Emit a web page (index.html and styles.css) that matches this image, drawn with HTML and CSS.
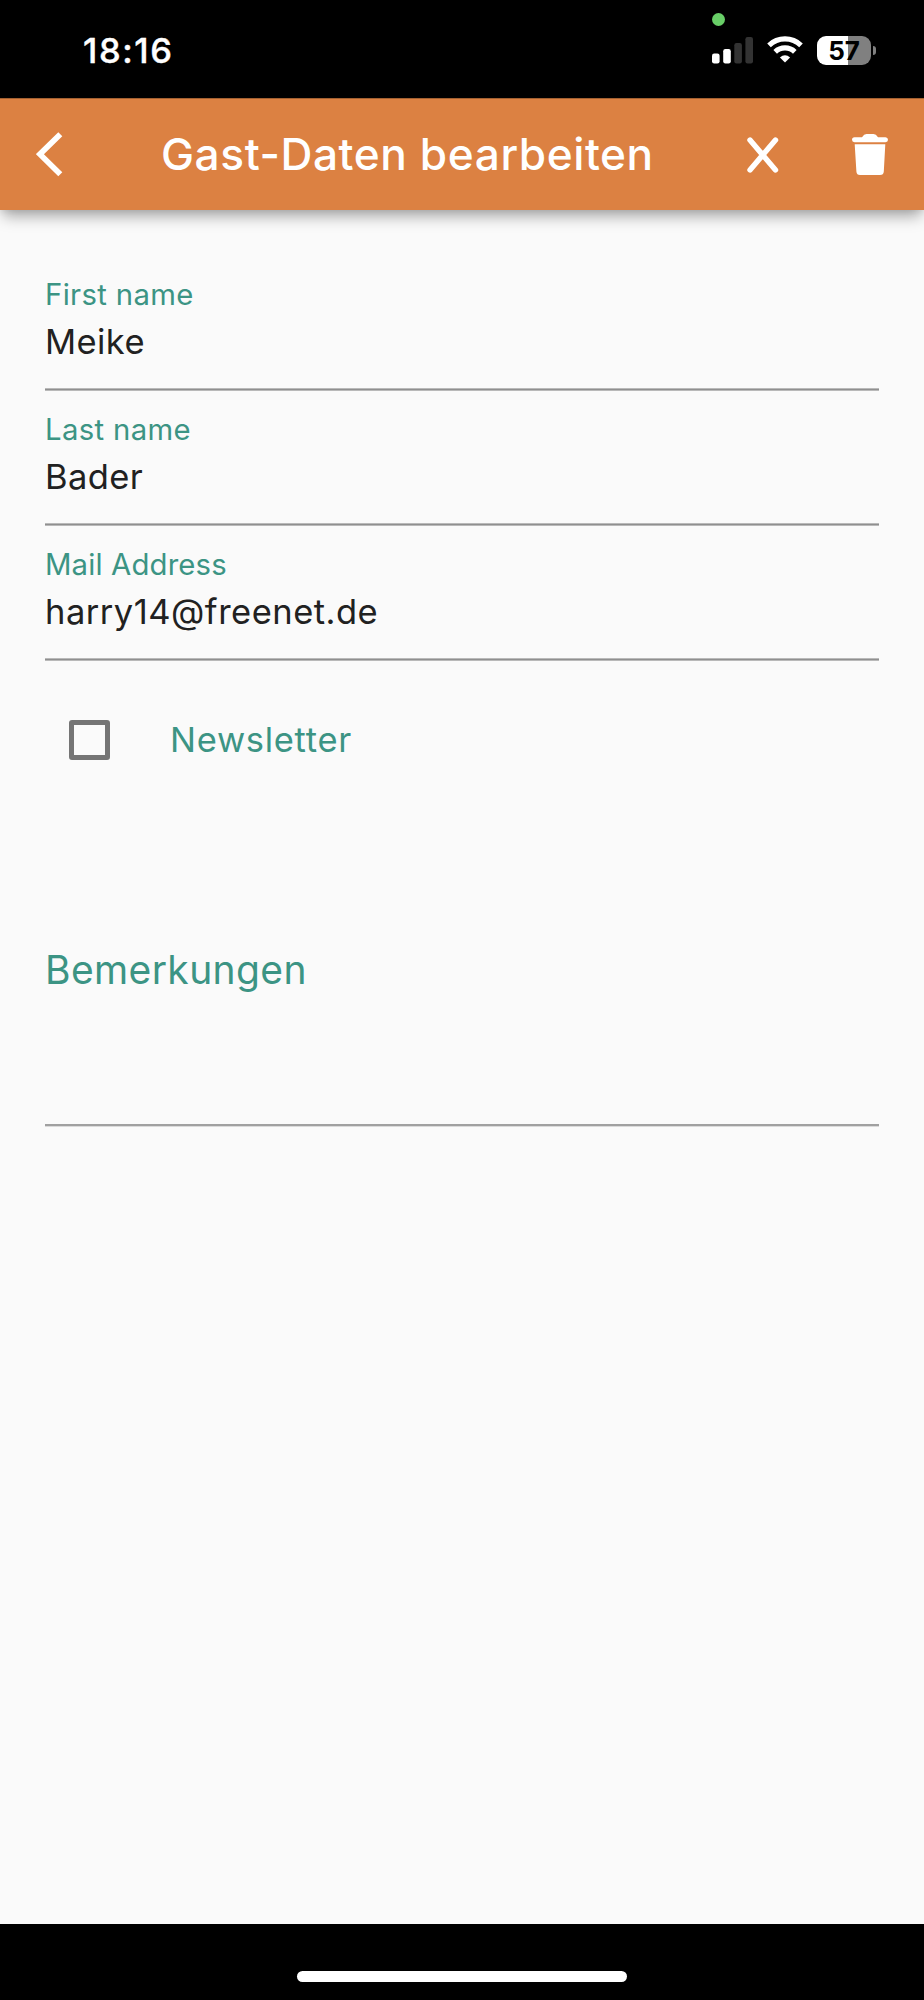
FILE: index.html
```html
<!DOCTYPE html>
<html lang="de">
<head>
<meta charset="utf-8">
<title>Gast-Daten bearbeiten</title>
<link rel="stylesheet" href="styles.css">
</head>
<body>
<div class="screen">
  <div class="status">
    <span class="time">18:16</span>
    <div class="indicators">
      <span class="camera-dot"></span>
      <svg class="signal" width="41" height="27" viewBox="0 0 41 27">
        <rect x="0" y="16.5" width="7.6" height="10" rx="2.2" fill="#fff"/>
        <rect x="11.2" y="12" width="7.6" height="14.5" rx="2.2" fill="#fff"/>
        <rect x="22.3" y="6" width="7.6" height="20.5" rx="2.2" fill="#333"/>
        <rect x="33.4" y="0" width="7.6" height="26.5" rx="2.2" fill="#333"/>
      </svg>
      <svg class="wifi" width="36" height="27" viewBox="0 0 36 27">
        <g fill="none" stroke="#fff" stroke-width="5.2">
          <path d="M2 9.3A23.3 23.3 0 0 1 34 9.3"/>
          <path d="M8.2 15.8A14.2 14.2 0 0 1 27.8 15.8"/>
        </g>
        <path d="M18 26.6L12.9 21.4Q18 17 23.1 21.4Z" fill="#fff"/>
      </svg>
      <div class="battery"><span>57</span></div>
      <span class="nub"></span>
    </div>
  </div>
  <header class="bar">
    <svg class="back" width="28" height="45" viewBox="0 0 28 45"><path d="M24.3 2.2L3.9 22.2L24.3 42.2" fill="none" stroke="#fff" stroke-width="5.7"/></svg>
    <h1 class="title">Gast-Daten bearbeiten</h1>
    <svg class="close" width="32" height="36" viewBox="0 0 32 36"><path d="M3 3L28.5 33M28.5 3L3 33" stroke="#fff" stroke-width="5.4" stroke-linecap="round"/></svg>
    <svg class="trash" width="36" height="42" viewBox="0 0 36 42" fill="#fff">
      <path d="M2.5 3.2H10Q12 0 14.5 0H21.5Q24 0 26 3.2H33.5A2.5 2.5 0 0 1 33.5 8.2H2.5A2.5 2.5 0 0 1 2.5 3.2Z"/>
      <path d="M2.7 10.3H33.3L31.8 37.5Q31.6 41 28 41H8Q4.6 41 4.4 37.5Z"/>
    </svg>
  </header>
  <main class="form">
    <div class="field"><label class="label">First name</label><div class="value">Meike</div></div>
    <div class="field"><label class="label">Last name</label><div class="value">Bader</div></div>
    <div class="field"><label class="label mail">Mail Address</label><div class="value address">harry14@freenet.de</div></div>
    <div class="check"><span class="box"></span><span class="news">Newsletter</span></div>
    <div class="notes">Bemerkungen</div>
  </main>
  <footer class="home"><span class="pill"></span></footer>
</div>
</body>
</html>
```

FILE: styles.css
```css
* { box-sizing: border-box; }
body { margin: 0; font-family: Inter, "Liberation Sans", sans-serif; }
.screen { width: 924px; height: 2000px; display: flex; flex-direction: column; background: #fafafa; }
.status { height: 98px; background: #000; color: #fff; display: flex; justify-content: space-between; padding: 0 48px 0 83px; }
.time { font-size: 34.5px; font-weight: 500; line-height: 44px; padding-top: 29px; letter-spacing: 1.6px; -webkit-text-stroke: .4px #fff; }
.indicators { position: relative; display: flex; align-items: flex-start; padding-top: 36px; }
.camera-dot { position: absolute; left: 0; top: 13px; width: 13px; height: 13px; border-radius: 50%; background: #68ce67; }
.signal { margin: 1px 14px 0 0; }
.wifi { margin-right: 14px; }
.battery { width: 54px; height: 29px; border-radius: 9px; background: linear-gradient(90deg, #fff 0 31px, #808080 31px); color: #000; font-size: 26px; font-weight: 700; line-height: 29px; text-align: center; }
.nub { width: 3px; height: 9px; margin: 10px 0 0 2px; border-radius: 0 4px 4px 0; background: #808080; }
.bar { height: 112px; flex: none; display: flex; align-items: center; padding: 0 36px; background: #dc8142; border-top: 1px solid #a56131; color: #fff; box-shadow: 0 9px 14px -3px rgba(0,0,0,.34), 0 2px 6px rgba(0,0,0,.06); z-index: 1; }
.title { margin: 0 0 2px 97px; width: 586px; font-size: 44.2px; font-weight: 500; line-height: 56px; white-space: nowrap; letter-spacing: .58px; }
.trash { margin-left: 73px; }
.form { flex: 1; padding: 46px 45px 0; }
.field { height: 135px; padding-top: 21px; background: linear-gradient(#b9b9b9 0 1px, #8f8f8f 1px 2px, #b9b9b9 2px) bottom / 100% 3px no-repeat; }
.label { display: block; height: 36px; line-height: 36px; font-size: 29.3px; color: #3c9484; letter-spacing: .35px; }
.mail { letter-spacing: .15px; }
.value { margin-top: 7px; height: 44px; line-height: 44px; font-size: 34.5px; color: #212121; letter-spacing: .4px; }
.address { letter-spacing: .5px; }
.check { display: flex; align-items: center; height: 44px; margin-top: 57px; padding-left: 24px; }
.box { width: 41px; height: 40px; margin-bottom: 1px; border: 5px solid #757575; border-radius: 3px; }
.news { margin-left: 60px; font-size: 34.5px; color: #3c9484; line-height: 44px; letter-spacing: .7px; }
.notes { margin-top: 182px; height: 183px; font-size: 39px; line-height: 52px; color: #3c9484; letter-spacing: .38px; background: linear-gradient(#a0a0a0 0 2px, #dadada 2px) bottom / 100% 3px no-repeat; }
.home { height: 76px; background: #000; display: flex; justify-content: center; padding-top: 47px; }
.pill { width: 330px; height: 11px; border-radius: 6px; background: #fff; }
```
